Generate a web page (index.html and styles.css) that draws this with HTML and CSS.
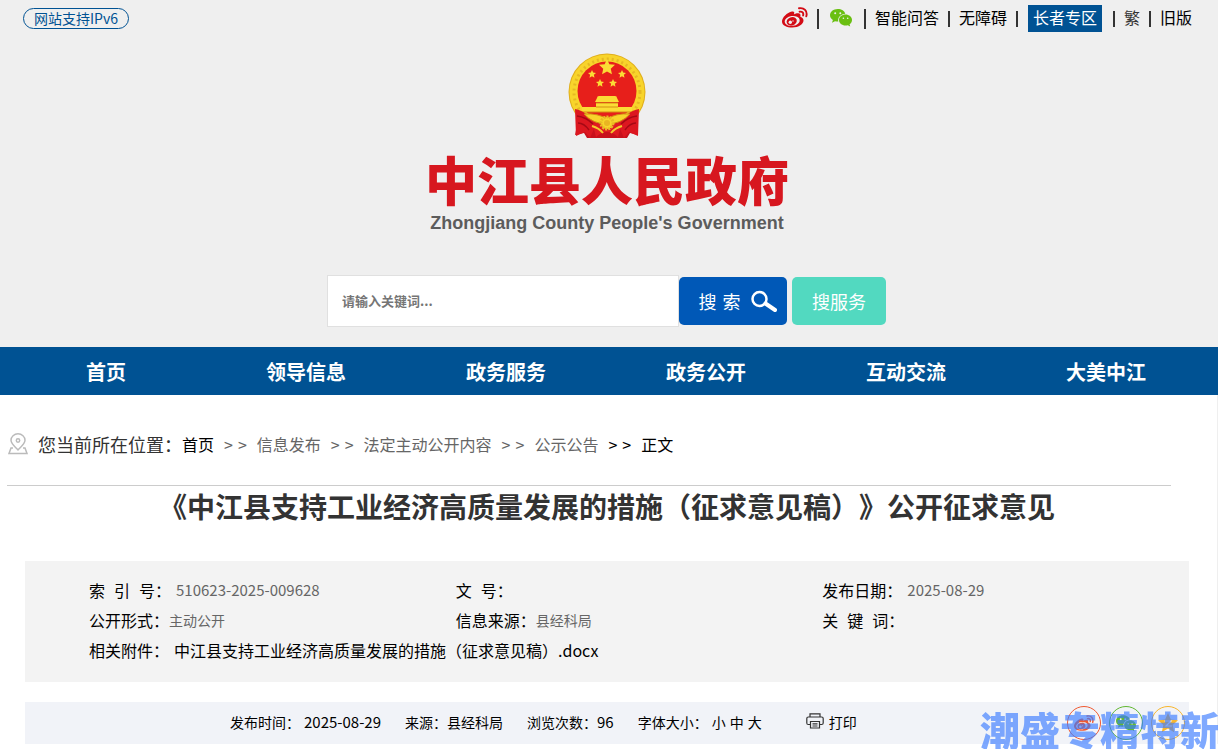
FILE: index.html
```html
<!DOCTYPE html>
<html lang="zh-CN">
<head>
<meta charset="utf-8">
<meta name="viewport" content="width=device-width, initial-scale=1">
<title>中江县人民政府</title>
<link rel="stylesheet" href="styles.css">
</head>
<body>
<svg class="defs" aria-hidden="true">
  <defs>
    <symbol id="weibo" viewBox="0 0 26 22">
      <path d="M10 4.500C5 5.500 0 10.500 0 14.500C0 18.500 5 20.500 10.200 20.500C17 20.500 21.500 17 21.500 13.500C21.500 11.300 19.800 10.300 18.300 9.800C18.900 7.700 18.300 6.300 16.200 6.200C14.800 6.100 13.200 6.700 12 7.200C12.800 5 12 4.100 10 4.500Z"/>
      <ellipse cx="10.200" cy="14" rx="7.600" ry="4.900" fill="var(--eye, #efefef)" transform="rotate(-8 10 14)"/>
      <ellipse cx="9.600" cy="14.200" rx="5.200" ry="4.200" transform="rotate(-20 10 14)"/>
      <circle cx="8.300" cy="15.300" r="1.700" fill="var(--eye, #efefef)"/>
      <circle cx="11" cy="14" r=".7" fill="var(--eye, #efefef)"/>
      <path d="M17 1.300C22 .2 25.800 4.200 24.300 9.300M17.600 4.700C20.300 4.200 21.800 6 21.100 8.500" fill="none" stroke="currentColor" stroke-width="1.900" stroke-linecap="round"/>
    </symbol>
    <symbol id="wechat" viewBox="0 0 22 18">
      <path d="M7.700 0C3.400 0 0 2.800 0 6.300C0 8.300 1.200 10 2.900 11.100L2 13.700L5 12.200C6 12.500 7 12.600 8.300 12.600C7.300 8.500 11 4.700 15.300 4.700C14.600 1.900 11.500 0 7.700 0Z"/>
      <path d="M22 11C22 7.900 19.100 5.500 15.500 5.500C11.900 5.500 9 7.900 9 11C9 14.100 11.900 16.500 15.500 16.500C16.300 16.500 17.100 16.400 17.800 16.200L20.200 17.600L19.600 15.300C21.100 14.300 22 12.800 22 11Z"/>
      <g fill="var(--eye, #efefef)"><circle cx="5.200" cy="4.300" r="1"/><circle cx="10.300" cy="4.300" r="1"/><circle cx="13.400" cy="9.300" r=".8"/><circle cx="17.700" cy="9.300" r=".8"/></g>
    </symbol>
    <symbol id="star" viewBox="0 0 20 20"><path d="M10 0L12.900 6.500L20 7.300L14.700 12.100L16.200 19.200L10 15.600L3.800 19.200L5.300 12.100L0 7.300L7.100 6.500Z"/></symbol>
  </defs>
</svg>

<header class="header">
  <div class="topbar">
    <a class="ipv6" href="#">网站支持IPv6</a>
    <nav class="tools" aria-label="工具">
      <a class="weibo" href="#" aria-label="微博"><svg width="26" height="22"><use href="#weibo"/></svg></a>
      <i class="sep tall"></i>
      <a class="wechat" href="#" aria-label="微信"><svg width="22" height="18"><use href="#wechat"/></svg></a>
      <i class="sep tall"></i>
      <a href="#">智能问答</a>
      <i class="sep"></i>
      <a href="#">无障碍</a>
      <i class="sep"></i>
      <a class="elder" href="#">长者专区</a>
      <i class="sep"></i>
      <a class="soft" href="#">繁</a>
      <i class="sep"></i>
      <a href="#">旧版</a>
    </nav>
  </div>
  <div class="brand">
    <svg class="emblem" viewBox="0 0 78 86" aria-hidden="true">
      <path d="M11 62L7 82L16 80L19 85H59L62 80L70 82L67 62Z" fill="#c8101c"/>
      <circle cx="39" cy="39" r="38.500" fill="#e0ae1c"/>
      <circle cx="39" cy="39" r="37.500" fill="#f8d42b"/>
      <circle cx="39" cy="39" r="33" fill="none" stroke="#e6b822" stroke-width="3" stroke-dasharray="2 3"/>
      <circle cx="39" cy="38" r="29.500" fill="#e71f1b"/>
      <g fill="#fbdc35">
        <use href="#star" x="31" y="6" width="16" height="16"/>
        <use href="#star" x="20" y="17" width="8" height="8"/>
        <use href="#star" x="50" y="17" width="8" height="8"/>
        <use href="#star" x="28" y="26" width="8" height="8"/>
        <use href="#star" x="41" y="26" width="8" height="8"/>
        <path d="M29 45Q29 43 31 43H47Q49 43 49 45L51 49H27ZM28 50H50V54H64V59H14V54H28Z"/>
      </g>
      <path d="M28 50H50M14 59H64M28 54H50" stroke="#d58d14" stroke-width="1" fill="none"/>
      <path d="M7 56C16 57 22 65 29 69L22 85L17 79L8 83ZM71 56C62 57 56 65 49 69L56 85L61 79L70 83Z" fill="#dc1720"/>
      <path d="M9 63Q18 64 25 71M10 70Q16 70 21 77M69 63Q60 64 53 71M68 70Q62 70 57 77" stroke="#a60914" stroke-width="1.500" fill="none"/>
      <path d="M25 72Q39 61 53 72L50 84Q39 74 28 84Z" fill="#df1a22"/>
      <path d="M16 61Q30 60 39 66Q48 60 62 61Q53 71 39 71Q25 71 16 61Z" fill="#f8d42b" stroke="#d18b14" stroke-width="1"/>
      <circle cx="39" cy="70" r="6" fill="#f8d42b" stroke="#e9ba25" stroke-width="3" stroke-dasharray="2 1"/>
      <circle cx="39" cy="70" r="3" fill="#e9b522"/>
      <path d="M24 73Q31 75 35 80M54 73Q47 75 43 80" stroke="#f3ca2d" stroke-width="2" fill="none"/>
    </svg>
    <div class="name">中江县人民政府</div>
    <div class="name-en">Zhongjiang County People's Government</div>
  </div>
  <form class="search">
    <input class="field" type="text" aria-label="请输入关键词" placeholder="请输入关键词...">
    <button class="go" type="button"><span class="go-text"><span>搜</span><span>索</span></span>
      <svg class="line" width="26" height="22" viewBox="0 0 26 22" stroke="#fff" aria-hidden="true"><circle cx="8.500" cy="9" r="7" stroke-width="2.500"/><path d="M14.500 13.500L24 20" stroke-width="4" stroke-linecap="round"/></svg>
    </button>
    <button class="service" type="button">搜服务</button>
  </form>
</header>

<nav class="menu" aria-label="主导航">
  <a href="#">首页</a><a href="#">领导信息</a><a href="#">政务服务</a><a href="#">政务公开</a><a href="#">互动交流</a><a href="#">大美中江</a>
</nav>

<main class="main">
  <nav class="crumbs" aria-label="当前位置">
    <svg class="line" width="20" height="22" viewBox="0 0 20 22" stroke="#bbb" stroke-width="1.500" aria-hidden="true"><path d="M10 17C6 13 3 10.500 3 7.300A7 6.500 0 0 1 17 7.300C17 10.500 14 13 10 17Z"/><circle cx="10" cy="7.500" r="1.700"/><path d="M5 15H3L1 20.500H19L17 15H15"/></svg>
    <span class="here">您当前所在位置：</span>
    <a class="dark" href="#">首页</a>
    <span class="arrow"><span>&gt;</span><span>&gt;</span></span>
    <a href="#">信息发布</a>
    <span class="arrow"><span>&gt;</span><span>&gt;</span></span>
    <a href="#">法定主动公开内容</a>
    <span class="arrow"><span>&gt;</span><span>&gt;</span></span>
    <a href="#">公示公告</a>
    <span class="arrow dark"><span>&gt;</span><span>&gt;</span></span>
    <span class="dark">正文</span>
  </nav>
  <article class="article">
    <h1 class="title">《中江县支持工业经济高质量发展的措施（征求意见稿）》公开征求意见</h1>
    <dl class="info">
      <div><dt class="spread"><span>索</span><span>引</span><span>号：</span></dt><dd class="num">510623-2025-009628</dd></div>
      <div><dt class="spread"><span>文</span><span>号：</span></dt><dd></dd></div>
      <div><dt>发布日期：</dt><dd class="num">2025-08-29</dd></div>
      <div><dt>公开形式：</dt><dd>主动公开</dd></div>
      <div><dt>信息来源：</dt><dd>县经科局</dd></div>
      <div><dt class="spread"><span>关</span><span>键</span><span>词：</span></dt><dd></dd></div>
      <div class="wide"><dt>相关附件：</dt><dd class="file"><a href="#">中江县支持工业经济高质量发展的措施（征求意见稿）.docx</a></dd></div>
    </dl>
    <div class="meta">
      <span class="pair">发布时间：<span class="figure">2025-08-29</span></span>
      <span>来源：县经科局</span>
      <span>浏览次数：<span class="figure">96</span></span>
      <span class="pair">字体大小：<span class="sizes"><a href="#">小</a><a href="#">中</a><a href="#">大</a></span></span>
      <a class="print" href="#"><svg class="line" width="18" height="18" viewBox="0 0 18 18" stroke="#333" stroke-width="1.200" aria-hidden="true"><path d="M4 4V.8H14V4M4 11.500H2.300Q.8 11.500 .8 10V5.500Q.8 4 2.300 4H15.700Q17.200 4 17.200 5.500V10Q17.200 11.500 15.700 11.500H14M4.500 8.500H13.500V15H4.500ZM6.500 10.800H11.500M6.500 13H11.500"/></svg>打印</a>
      <div class="share">
        <a class="s-weibo" href="#" aria-label="分享到微博"><svg width="20" height="17"><use href="#weibo"/></svg></a>
        <a class="s-wechat" href="#" aria-label="分享到微信"><svg width="20" height="17"><use href="#wechat"/></svg></a>
        <a class="s-star" href="#" aria-label="分享到空间"><svg width="20" height="20" viewBox="0 0 20 20"><use href="#star"/><path d="M6.500 8H13L8 13H14" fill="none" stroke="#f1f3f8" stroke-width="1.200"/></svg></a>
      </div>
    </div>
  </article>
</main>
<div class="watermark">潮盛专精特新</div>
</body>
</html>
```
FILE: styles.css
```css
* { box-sizing: border-box; }
body {
  margin: 0;
  font: 16px/24px "Noto Sans CJK SC", sans-serif;
  text-spacing-trim: space-all;
  color: #000;
  background: #fff;
  overflow: hidden;
}
a { color: inherit; text-decoration: none; }
svg { display: block; fill: currentColor; flex: none; }
svg.line { fill: none; }
.defs { position: absolute; width: 0; height: 0; }

.header { background: #efefef; padding-bottom: 20px; }
.topbar {
  display: flex;
  justify-content: space-between;
  align-items: center;
  padding: 5px 26px 0 23px;
}
.ipv6 {
  border: 1px solid #005293;
  border-radius: 11px;
  padding: 0 10px;
  font-size: 14px;
  line-height: 19px;
  color: #005293;
}
.tools { display: flex; align-items: center; gap: 9px; line-height: 25px; }
.tools a { padding-bottom: 2px; }
.sep { width: 2px; height: 16px; background: #333; }
.sep.tall { height: 20px; }
.weibo { color: #d30b15; }
.tools .wechat { color: #6abf11; padding: 0 3px 2px 2px; }
.tools .elder { background: #005293; color: #fff; padding: 0 5px 2px; margin: 0 2px 0 1px; }
.soft { color: #333; }

.brand { display: flex; flex-direction: column; align-items: center; padding: 21px 4px 0 0; }
.emblem { width: 78px; height: 86px; }
.name { margin-top: 10px; font-size: 52px; line-height: 60px; font-weight: 900; color: #d7171f; }
.name-en { margin-top: 2px; font: bold 18px/24px "Liberation Sans", sans-serif; color: #5c5c5c; }

.search {
  display: flex;
  justify-content: center;
  align-items: center;
  padding: 40px 5px 0 0;
}
.field {
  width: 352px;
  height: 52px;
  border: 1px solid #e0e0e0;
  padding: 0 14px 2px;
  font: bold 13px/20px "Noto Sans CJK SC", sans-serif;
  background: #fff;
}
.field::placeholder { color: #757575; opacity: 1; }
.go, .service {
  height: 48px;
  border: 0;
  border-radius: 5px;
  color: #fff;
  font: 18px/24px "Noto Sans CJK SC", sans-serif;
}
.go { width: 108px; background: #0058b7; display: flex; align-items: center; justify-content: center; gap: 10px; padding: 0 0 0 9px; }
.go-text { display: flex; gap: 6px; }
.service { width: 94px; margin-left: 5px; background: #52d9c0; padding: 0; }

.menu {
  display: grid;
  grid-template-columns: repeat(6, 1fr);
  padding: 1px 12px 0 6px;
  background: #005293;
  color: #fff;
  font-size: 20px;
  font-weight: bold;
  line-height: 47px;
  text-align: center;
}

.main { border-right: 1px solid #efefef; }
.crumbs {
  display: flex;
  align-items: center;
  gap: 10px;
  margin: 0 46px 0 7px;
  padding: 37px 0 29px 1px;
  border-bottom: 1px solid #ccc;
  color: #666;
}
.here { font-size: 18px; color: #333; margin-right: -10px; }
.crumbs .dark { color: #000; }
.arrow { display: flex; gap: 5px; }

.article { margin: 0 28px 0 25px; }
.title { margin: 0; font-size: 28px; line-height: 40px; text-align: center; color: #333; }
.info {
  display: grid;
  grid-template-columns: repeat(3, 1fr);
  margin: 35px 0 0;
  padding: 14px 0 17px 64px;
  background: #f3f3f3;
  line-height: 30px;
}
.info div { display: flex; }
.info .wide { grid-column: 1 / -1; }
.info dd { margin: 0; font-size: 14px; color: #666; }
.info .num { font-size: 15px; margin-left: 5px; }
.info .file { font-size: 16px; margin-left: 5px; color: #000; }
.spread { display: flex; gap: 9px; }

.meta {
  display: flex;
  align-items: center;
  gap: 24px;
  height: 42px;
  margin-top: 20px;
  padding: 0 0 2px 205px;
  background: #f1f3f8;
  font-size: 14px;
}
.pair, .sizes { display: flex; gap: 4px; }
.figure { font-size: 15px; }
.print { display: flex; align-items: center; gap: 5px; margin-left: 20px; }
.share { display: flex; gap: 8px; margin-left: auto; padding: 2px 4px 0 0; --eye: #f1f3f8; }
.share a {
  display: flex;
  align-items: center;
  justify-content: center;
  width: 34px;
  height: 34px;
  border: 1px solid;
  border-radius: 50%;
}
.s-weibo { color: #f05a32; }
.s-wechat { color: #62b832; }
.s-star { color: #f8b62d; }
.watermark {
  position: fixed;
  right: -2px;
  bottom: 0;
  font-size: 40px;
  line-height: 40px;
  font-weight: 900;
  color: #3b7cff;
  opacity: .65;
  pointer-events: none;
}
```
